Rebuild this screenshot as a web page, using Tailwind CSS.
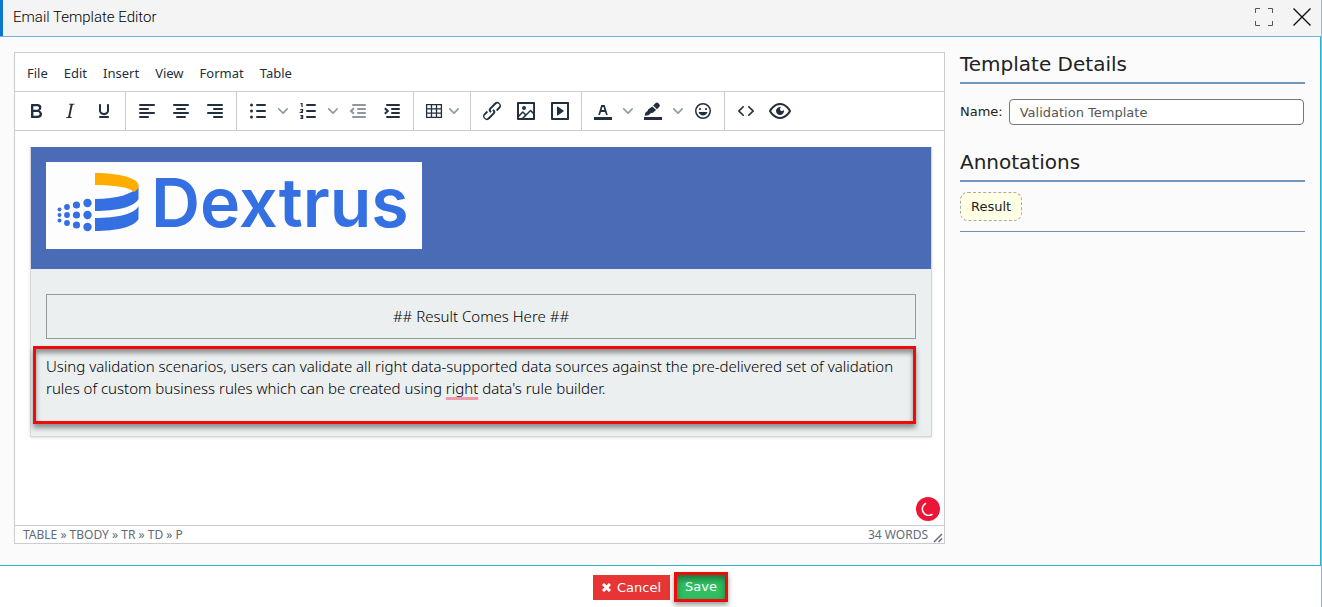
<!DOCTYPE html>
<html lang="en">
<head>
    <meta charset="UTF-8">
    <meta name="viewport" content="width=device-width, initial-scale=1.0">
    <title>Email Template Editor</title>
    <script src="https://cdn.jsdelivr.net/npm/@tailwindcss/browser@4"></script>
</head>
<body class="flex flex-col min-h-screen bg-white text-[#222] font-['DejaVu_Sans',sans-serif] border-r border-[#7fbfe8]">
    <!-- Title bar -->
    <header class="flex items-center justify-between h-[37px] bg-[#f4f4f4] border-b border-[#6cb2e0]">
        <h1 class="self-stretch flex items-center border-l-3 border-[#0b78cf] pl-[10px] pb-[2px] text-[15px] text-black font-light font-['Roboto',sans-serif]">Email Template Editor</h1>
        <div class="flex items-center gap-5 pr-[10px] pb-[2px]">
            <button aria-label="Full screen">
                <svg class="w-[18px] h-[18px]" viewBox="0 0 18 18" fill="none" stroke="#555" stroke-width="1"><path d="M.5 5V.5H5M13 .5h4.5V5M17.5 13v4.5H13M5 17.5H.5V13"/></svg>
            </button>
            <button aria-label="Close">
                <svg class="w-[18px] h-[18px]" viewBox="0 0 18 18" fill="none" stroke="#111" stroke-width="1.4"><path d="M.5.5l17 17M17.5.5l-17 17"/></svg>
            </button>
        </div>
    </header>

    <!-- Main Content -->
    <main class="flex-1 flex gap-[15px] bg-[#fbfbfb] border-b border-r border-[#2fb0cc] pt-[15px] pb-[21px] pl-[14px] pr-[15px]">
        <!-- Editor -->
        <section class="flex-1 flex flex-col bg-white border border-[#ccc] text-[#222f3e]">
            <nav class="flex items-center h-[39px] gap-4 px-3 pt-[3px] border-b border-[#ccc] text-[13px] font-['Noto_Sans',sans-serif]">
                <button>File</button>
                <button>Edit</button>
                <button>Insert</button>
                <button>View</button>
                <button>Format</button>
                <button>Table</button>
            </nav>

            <!-- Toolbar -->
            <div class="flex h-[39px] border-b border-[#ccc]">
                <div class="flex px-1 border-r border-[#ccc]">
                    <button aria-label="Bold" class="w-[34px] grid place-items-center"><svg width="24" height="24" fill="#222f3e" fill-rule="evenodd"><path d="M7.8 19c-.3 0-.5 0-.6-.2l-.2-.5V5.7c0-.2 0-.4.2-.5l.6-.2h5c1.5 0 2.7.3 3.5 1 .7.6 1.1 1.4 1.1 2.5a3 3 0 01-.6 1.9c-.4.6-1 1-1.6 1.2.4.1.9.3 1.3.6s.8.7 1 1.2c.4.4.5 1 .5 1.6 0 1.3-.4 2.3-1.3 3-.8.7-2.1 1-3.8 1H7.8zm5-8.3c.6 0 1.2-.1 1.6-.5.4-.3.6-.7.6-1.3 0-1.1-.8-1.7-2.3-1.7H9.3v3.5h3.4zm.5 6c.7 0 1.3-.1 1.7-.4.4-.4.6-.9.6-1.5s-.2-1-.7-1.4c-.4-.3-1-.4-2-.4H9.4v3.8h4z"/></svg></button>
                    <button aria-label="Italic" class="w-[34px] grid place-items-center"><svg width="24" height="24" fill="#222f3e"><path d="M16.7 4.7l-.1.9h-.3c-.6 0-1 0-1.4.3-.3.3-.4.6-.5 1.1l-2.1 9.8v.6c0 .5.4.8 1.4.8h.2l-.2.8H8l.2-.8h.2c1.1 0 1.8-.5 2-1.5l2-9.8.1-.5c0-.6-.4-.8-1.4-.8h-.3l.2-.9h5.8z"/></svg></button>
                    <button aria-label="Underline" class="w-[34px] grid place-items-center"><svg width="24" height="24" fill="#222f3e"><path d="M16 5c.6 0 1 .4 1 1v5.5a4 4 0 01-.4 1.8l-1 1.4a5.3 5.3 0 01-5.5 1 5 5 0 01-1.6-1c-.5-.4-.8-.9-1.1-1.4a4 4 0 01-.4-1.8V6c0-.6.4-1 1-1s1 .4 1 1v5.5c0 .3 0 .6.2 1l.6.7a3.3 3.3 0 002.2.8 3.4 3.4 0 002.2-.8c.3-.2.4-.5.6-.8l.2-.9V6c0-.6.4-1 1-1zM8 17h8c.6 0 1 .4 1 1s-.4 1-1 1H8a1 1 0 010-2z"/></svg></button>
                </div>
                <div class="flex px-1 border-r border-[#ccc]">
                    <button aria-label="Align left" class="w-[34px] grid place-items-center"><svg width="24" height="24" stroke="#222f3e" stroke-width="2" stroke-linecap="round"><path d="M5 6h14M5 10h8M5 14h14M5 18h8"/></svg></button>
                    <button aria-label="Align center" class="w-[34px] grid place-items-center"><svg width="24" height="24" stroke="#222f3e" stroke-width="2" stroke-linecap="round"><path d="M5 6h14M8 10h8M5 14h14M8 18h8"/></svg></button>
                    <button aria-label="Align right" class="w-[34px] grid place-items-center"><svg width="24" height="24" stroke="#222f3e" stroke-width="2" stroke-linecap="round"><path d="M5 6h14M11 10h8M5 14h14M11 18h8"/></svg></button>
                </div>
                <div class="flex px-1 border-r border-[#ccc]">
                    <button aria-label="Bullet list" class="w-[34px] grid place-items-center"><svg width="24" height="24" stroke="#222f3e" stroke-width="2" stroke-linecap="round"><path d="M11 6h8M11 12h8M11 18h8"/><path stroke-width="3" d="M5.500 6h0M5.500 12h0M5.500 18h0"/></svg></button>
                    <button aria-label="Bullet list styles" class="w-4 grid place-items-center"><svg width="10" height="10" fill="#222f3e80"><path d="M8.700 2.200c.3-.3.8-.3 1 0 .4.4.4.9 0 1.200L5.700 7.800c-.3.3-.9.3-1.200 0L.2 3.400a.8.8 0 010-1.200c.3-.3.8-.3 1.100 0L5 6l3.700-3.800z"/></svg></button>
                    <button aria-label="Numbered list" class="w-[34px] grid place-items-center"><svg width="24" height="24" fill="none" stroke="#222f3e" stroke-width="2" stroke-linecap="round"><path d="M11 6h8M11 12h8M11 18h8"/><path stroke-width="1.200" stroke-linecap="butt" d="M4.500 4.600H6V8M4.300 10.600H6.600V12L4.800 13.400H7M4.300 16.600H6.600V19.400H4.300M5 18h1.600"/></svg></button>
                    <button aria-label="Numbered list styles" class="w-4 grid place-items-center"><svg width="10" height="10" fill="#222f3e80"><path d="M8.700 2.200c.3-.3.8-.3 1 0 .4.4.4.9 0 1.200L5.700 7.800c-.3.3-.9.3-1.200 0L.2 3.400a.8.8 0 010-1.200c.3-.3.8-.3 1.100 0L5 6l3.700-3.800z"/></svg></button>
                    <button aria-label="Decrease indent" disabled class="w-[34px] grid place-items-center"><svg class="opacity-50" width="24" height="24" fill="none" stroke="#222f3e" stroke-width="2" stroke-linecap="round"><path d="M7 6h12M12 10h7M12 14h7M7 18h12"/><path stroke-linecap="butt" d="M8 9.300L5 12l3 2.700"/></svg></button>
                    <button aria-label="Increase indent" class="w-[34px] grid place-items-center"><svg width="24" height="24" fill="none" stroke="#222f3e" stroke-width="2" stroke-linecap="round"><path d="M7 6h12M12 10h7M12 14h7M7 18h12"/><path stroke-linecap="butt" d="M4.800 9.300l3 2.700-3 2.700"/></svg></button>
                </div>
                <div class="flex px-1 border-r border-[#ccc]">
                    <button aria-label="Table" class="w-[48px] flex items-center justify-between pl-1 pr-[7px]">
                        <svg width="24" height="24" fill="none" stroke="#222f3e" stroke-width="1.300"><path d="M4.600 5.600h14.800v12.800H4.600zM4.600 9.800h14.800M4.600 14.100h14.800M9.500 5.600v12.800M14.500 5.600v12.800"/></svg>
                        <svg width="10" height="10" fill="#222f3e80"><path d="M8.700 2.200c.3-.3.8-.3 1 0 .4.4.4.9 0 1.200L5.700 7.800c-.3.3-.9.3-1.200 0L.2 3.400a.8.8 0 010-1.200c.3-.3.8-.3 1.100 0L5 6l3.700-3.800z"/></svg>
                    </button>
                </div>
                <div class="flex px-1 border-r border-[#ccc]">
                    <button aria-label="Link" class="w-[34px] grid place-items-center"><svg width="24" height="24" fill="#222f3e"><path d="M6.200 12.300a1 1 0 011.400 1.400l-2.100 2a2 2 0 102.700 2.800l4.800-4.800a1 1 0 000-1.400 1 1 0 111.400-1.300 2.900 2.900 0 010 4L9.600 20a3.900 3.900 0 01-5.500-5.500l2-2zm11.600-.6a1 1 0 01-1.400-1.400l2-2a2 2 0 10-2.600-2.800L11 10.300a1 1 0 000 1.400A1 1 0 119.600 13a2.900 2.900 0 010-4L14.400 4a3.900 3.900 0 015.500 5.500l-2 2z"/></svg></button>
                    <button aria-label="Image" class="w-[34px] grid place-items-center"><svg width="24" height="24" fill="#222f3e" fill-rule="evenodd"><path d="M5 15.700l3.300-3.200c.3-.3.7-.3 1 0L12 15l4.100-4c.3-.4.8-.4 1 0l2 1.900V5H5v10.700zM5 18v1h3l2.800-2.900-2-2L5 17.900zm14-3l-2.500-2.400-6.400 6.500H19v-4zM4 3h16c.6 0 1 .4 1 1v16c0 .6-.4 1-1 1H4a1 1 0 01-1-1V4c0-.6.4-1 1-1zm6 8a2 2 0 100-4 2 2 0 000 4z"/></svg></button>
                    <button aria-label="Media" class="w-[34px] grid place-items-center"><svg width="24" height="24" fill="#222f3e" fill-rule="evenodd"><path d="M4 3h16c.6 0 1 .4 1 1v16c0 .6-.4 1-1 1H4a1 1 0 01-1-1V4c0-.6.4-1 1-1zm1 2v14h14V5H5zm4.800 2.600l5.600 4a.5.5 0 010 .8l-5.600 4A.5.5 0 019 16V8a.5.5 0 01.8-.4z"/></svg></button>
                </div>
                <div class="flex px-1 border-r border-[#ccc]">
                    <button aria-label="Text color" class="w-[34px] grid place-items-center"><svg width="24" height="24" fill="#222f3e" fill-rule="evenodd"><path d="M3 18h18v3H3z"/><path d="M8.700 16h-.8a.5.5 0 01-.5-.6l2.700-9c.1-.3.3-.4.5-.4h2.800c.2 0 .4.1.5.4l2.700 9a.5.5 0 01-.5.6h-.8a.5.5 0 01-.4-.4l-.7-2.200c0-.3-.3-.4-.5-.4h-3.400c-.2 0-.4.1-.5.4l-.7 2.200c0 .3-.2.4-.4.4zm2.600-7.600l-.6 2a.5.5 0 00.5.6h1.600a.5.5 0 00.5-.6l-.6-2c0-.3-.3-.4-.5-.4h-.4c-.2 0-.4.1-.5.4z"/></svg></button>
                    <button aria-label="Text color list" class="w-4 grid place-items-center"><svg width="10" height="10" fill="#222f3e80"><path d="M8.700 2.200c.3-.3.8-.3 1 0 .4.4.4.9 0 1.200L5.700 7.800c-.3.3-.9.3-1.200 0L.2 3.400a.8.8 0 010-1.200c.3-.3.8-.3 1.100 0L5 6l3.700-3.800z"/></svg></button>
                    <button aria-label="Highlight" class="w-[34px] grid place-items-center"><svg width="24" height="24" fill="#222f3e"><path d="M3 18h18v3H3z"/><path d="M12.200 6.600l2.200-2.300a2.200 2.200 0 013 0l.8.800a2.200 2.200 0 010 3l-2.300 2.200z"/><path d="M11.400 7.400l3.700 3.700-3.200 2.700-1.800.2-2.600 2.300-3.800.5.600-3.100 2.400-2 .3-1.300z"/></svg></button>
                    <button aria-label="Highlight list" class="w-4 grid place-items-center"><svg width="10" height="10" fill="#222f3e80"><path d="M8.700 2.200c.3-.3.8-.3 1 0 .4.4.4.9 0 1.200L5.700 7.800c-.3.3-.9.3-1.200 0L.2 3.400a.8.8 0 010-1.200c.3-.3.8-.3 1.100 0L5 6l3.700-3.800z"/></svg></button>
                    <button aria-label="Emoticons" class="w-[34px] grid place-items-center"><svg width="24" height="24" fill="#222f3e" fill-rule="evenodd"><path d="M9 11c.6 0 1-.4 1-1s-.4-1-1-1a1 1 0 00-1 1c0 .6.4 1 1 1zm6 0c.6 0 1-.4 1-1s-.4-1-1-1a1 1 0 00-1 1c0 .6.4 1 1 1zm-3 5.500c2.100 0 4-1.500 4.400-3.500H7.600c.5 2 2.300 3.500 4.400 3.500zM12 4a8 8 0 100 16 8 8 0 000-16zm0 14.500a6.500 6.500 0 110-13 6.500 6.500 0 010 13z"/></svg></button>
                </div>
                <div class="flex px-1">
                    <button aria-label="Source code" class="w-[34px] grid place-items-center"><svg width="24" height="24" fill="#222f3e"><path d="M9.800 15.700c.3.3.3.8 0 1-.3.4-.9.4-1.200 0l-4.400-4.100a.8.8 0 010-1.200l4.400-4.200c.3-.3.9-.3 1.200 0 .3.3.3.8 0 1.100L6 12l3.800 3.700zM14.200 15.700c-.3.3-.3.8 0 1 .4.4.9.4 1.200 0l4.400-4.100c.3-.3.3-.9 0-1.200l-4.400-4.200a.8.8 0 00-1.200 0c-.3.3-.3.8 0 1.100L18 12l-3.800 3.700z"/></svg></button>
                    <button aria-label="Preview" class="w-[34px] grid place-items-center"><svg width="24" height="24" fill="#222f3e" fill-rule="evenodd"><path d="M3.500 12.500c.5.8 1.100 1.600 1.800 2.300 2 2 4.200 3.200 6.700 3.200s4.700-1.200 6.700-3.200a16.200 16.200 0 002.100-2.800 15.700 15.700 0 00-2.100-2.800c-2-2-4.200-3.200-6.700-3.200a9.300 9.300 0 00-6.700 3.200A16.200 16.200 0 003.200 12c0 .2.2.3.3.5zm-2.400-1l.7-1.200L4 7.800C6.200 5.400 8.900 4 12 4c3 0 5.800 1.400 8.100 3.800a18.200 18.200 0 012.800 3.700v1l-.7 1.200a18.100 18.100 0 01-2.100 2.500c-2.300 2.400-5 3.800-8.100 3.800-3 0-5.800-1.400-8.100-3.800a18.200 18.200 0 01-2.800-3.700 1 1 0 010-1zm12-3.300a2 2 0 102.700 2.600 4 4 0 11-2.600-2.600z"/></svg></button>
                </div>
            </div>

            <!-- Mail body -->
            <div class="relative flex-1 pt-4 pl-[15px] pr-[12px] text-black text-[15px] leading-[22px] font-light font-['Noto_Sans',sans-serif]">
                <table class="w-full bg-[#ebeff0] border border-t-0 border-[#d5d9da] shadow-sm">
                    <tbody>
                        <tr>
                            <td class="bg-[#4a6cb6] h-[122px] pl-[15px] pt-[15px] align-top">
                                <div class="flex items-center w-[376px] h-[87px] bg-[#fdfdfd] text-[#3570e3]">
                                    <svg class="shrink-0 w-[84px] h-[60px] ml-[10px] mb-[8px]" viewBox="0 0 84 60" role="img" aria-label="Dextrus logo">
                                        <g fill="#3570e3">
                                            <circle cx="3.500" cy="37.500" r="2"/><circle cx="3.500" cy="43" r="2"/><circle cx="3.500" cy="48.500" r="2"/>
                                            <circle cx="11" cy="35" r="2.900"/><circle cx="11" cy="43" r="2.900"/><circle cx="11" cy="51" r="2.900"/>
                                            <circle cx="20.500" cy="33" r="3.600"/><circle cx="20.500" cy="43" r="3.600"/><circle cx="20.500" cy="53" r="3.600"/>
                                            <circle cx="31.500" cy="31" r="4.200"/><circle cx="31.500" cy="43" r="4.200"/><circle cx="31.500" cy="55" r="4.200"/>
                                            <path d="M39 27c22 0 37-5 43.500-12v12c-4 8-22 12-43.500 12z"/>
                                            <path d="M39 46c22 0 40-4 43.500-12v13c-4 8-22 12-43.500 12z"/>
                                        </g>
                                        <path fill="#ffae00" d="M39 1c26 0 46 6 43.500 14-.5 2-2 3.500-4.500 5-5-5-20-7-39-7z"/>
                                    </svg>
                                    <span class="ml-[11px] mb-[8px] text-[68px] leading-none font-semibold font-['Inter',sans-serif]">Dextrus</span>
                                </div>
                            </td>
                        </tr>
                        <tr>
                            <td class="pt-[25px] px-[15px] pb-[12px]">
                                <p class="border border-[#999] pt-[10px] pb-[11px] text-center">## Result Comes Here ##</p>
                                <div class="relative mt-[16px] h-[69px]">
                                    <p>Using validation scenarios, users can validate all right data-supported data sources against the pre-delivered set of validation rules of custom business rules which can be created using <span class="underline decoration-3 underline-offset-3 decoration-[#f09aae] [text-decoration-skip-ink:none]">right</span> data's rule builder.</p>
                                    <!-- Highlight frame -->
                                    <div class="absolute -left-[13px] right-0 -top-[9px] h-[78px] border-3 border-[#f00b0b] shadow-[0_4px_5px_#0006,inset_0_4px_5px_#0006]"></div>
                                </div>
                            </td>
                        </tr>
                    </tbody>
                </table>
                <button aria-label="Checking text" class="absolute right-1 bottom-1 w-6 h-6 rounded-full bg-[#eb1537] grid place-items-center">
                    <svg width="14" height="14" fill="none" stroke="#fff" stroke-width="1.500" stroke-linecap="round"><path d="M4.500 1.500A6 6 0 0011 12.500"/></svg>
                </button>
            </div>

            <!-- Status bar -->
            <div class="flex items-center justify-between h-[18px] border-t border-[#ccc] pl-2 text-[12px] text-[#5f6b7a] font-['Noto_Sans',sans-serif]">
                <span>TABLE » TBODY » TR » TD » P</span>
                <span class="flex h-full items-center gap-[5px]">34 WORDS
                    <svg class="self-end mr-px" width="10" height="10" stroke="#5f6b7a" stroke-width="1.500"><path d="M1 9l8-8M5.500 9L9 5.500"/></svg>
                </span>
            </div>
        </section>

        <!-- Details -->
        <aside class="w-[345px] text-[13px]">
            <h2 class="h-[32px] text-[20px] leading-[24px] border-b-2 border-[#7096bf]">Template Details</h2>
            <div class="flex items-center gap-[6px] mt-[15px] pr-px">
                <label for="template-name">Name:</label>
                <input id="template-name" type="text" value="Validation Template" class="flex-1 min-w-0 h-[26px] px-[10px] bg-white border border-[#767676] rounded text-[#555]">
            </div>
            <h2 class="mt-[25px] h-[32px] text-[20px] leading-[24px] border-b-2 border-[#7096bf]">Annotations</h2>
            <div class="py-[10px] border-b border-[#7a8fa8]">
                <button class="h-[29px] px-[10px] bg-[#ffffe6] border border-dashed border-[#aaa] rounded-lg">Result</button>
            </div>
        </aside>
    </main>

    <!-- Footer -->
    <footer class="flex items-start justify-center gap-1 h-[41px] pt-[6px] text-[13px] text-white">
        <button class="flex items-center gap-[6px] h-[25px] mt-[3px] px-[9px] bg-[#e73535]">
            <svg width="9" height="9" stroke="#fff" stroke-width="3"><path d="M1 1l7 7M8 1L1 8"/></svg>
            Cancel
        </button>
        <button class="h-[30px] px-2 bg-[#2fbe62] border-3 border-[#f00b0b] shadow-[0_3px_5px_#0006,inset_0_4px_6px_#0006]">Save</button>
    </footer>
</body>
</html>
